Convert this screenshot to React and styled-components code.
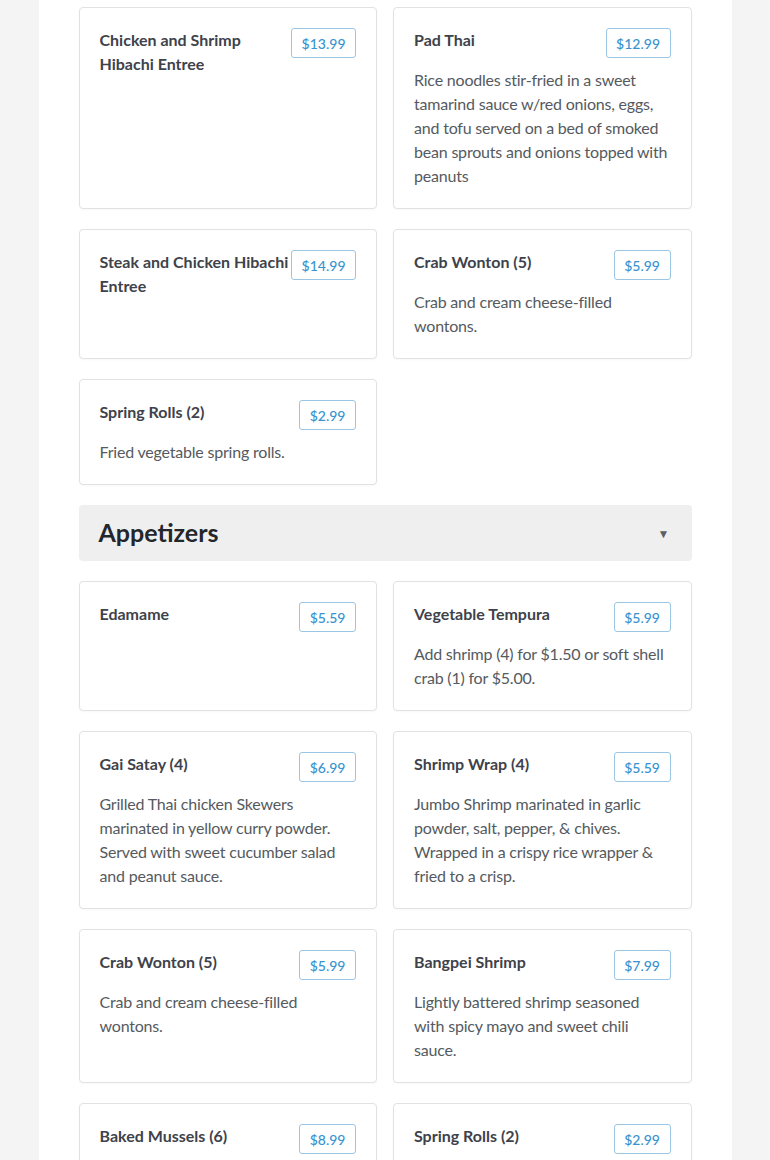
import React from "react";
import styled, { createGlobalStyle } from "styled-components";

const Global = createGlobalStyle`
  html, body { margin: 0; padding: 0; background: #f4f4f4; }
  body { font-family: Lato, "Open Sans", Arial, sans-serif; }
  * { box-sizing: border-box; }
`;

const Page = styled.div`
  width: 90%;
  margin: 0 auto;
  background: #ffffff;
  padding: 7px 40px 40px;
  min-height: 1160px;
`;

const Grid = styled.div`
  display: grid;
  grid-template-columns: 1fr 1fr;
  column-gap: 16px;
  row-gap: 20px;
  margin-bottom: 20px;
`;

const Card = styled.div`
  border: 1px solid #e2e2e2;
  border-radius: 4px;
  background: #fff;
  padding: 20px;
  box-shadow: 0 1px 2px rgba(0, 0, 0, 0.03);
`;

const CardHead = styled.div`
  display: flex;
  align-items: flex-start;
  justify-content: space-between;
`;

const Title = styled.h3`
  margin: 0;
  font-size: 16px;
  line-height: 24px;
  font-weight: 700;
  color: #3e424a;
  flex: 1;
  min-width: 0;
`;

const Price = styled.span`
  flex-shrink: 0;
  display: inline-flex;
  align-items: center;
  height: 30px;
  padding: 0 9.5px;
  border: 1px solid #9ac6e4;
  border-radius: 3px;
  color: #3893d0;
  font-size: 14px;
  font-weight: 500;
`;

const Desc = styled.p`
  margin: 10px 0 0;
  font-size: 16px;
  line-height: 24px;
  letter-spacing: -0.2px;
  color: #555a60;
`;

const SectionHeader = styled.div`
  display: flex;
  align-items: center;
  justify-content: space-between;
  height: 56px;
  padding: 0 20px;
  background: #efefef;
  border-radius: 4px;
  margin-bottom: 20px;
`;

const SectionTitle = styled.h2`
  margin: 0 0 2px;
  font-size: 25px;
  font-weight: 700;
  color: #23262b;
`;

const Arrow = styled.span`
  font-size: 12px;
  color: #5b5f66;
  margin-right: 2px;
`;

const entrees = [
  { t: "Chicken and Shrimp Hibachi Entree", p: "$13.99" },
  {
    t: "Pad Thai",
    p: "$12.99",
    d: "Rice noodles stir-fried in a sweet tamarind sauce w/red onions, eggs, and tofu served on a bed of smoked bean sprouts and onions topped with peanuts",
  },
  { t: "Steak and Chicken Hibachi Entree", p: "$14.99" },
  { t: "Crab Wonton (5)", p: "$5.99", d: "Crab and cream cheese-filled wontons." },
  { t: "Spring Rolls (2)", p: "$2.99", d: "Fried vegetable spring rolls." },
];

const appetizers = [
  { t: "Edamame", p: "$5.59" },
  {
    t: "Vegetable Tempura",
    p: "$5.99",
    d: "Add shrimp (4) for $1.50 or soft shell crab (1) for $5.00.",
  },
  {
    t: "Gai Satay (4)",
    p: "$6.99",
    d: "Grilled Thai chicken Skewers marinated in yellow curry powder. Served with sweet cucumber salad and peanut sauce.",
  },
  {
    t: "Shrimp Wrap (4)",
    p: "$5.59",
    d: "Jumbo Shrimp marinated in garlic powder, salt, pepper, & chives. Wrapped in a crispy rice wrapper & fried to a crisp.",
  },
  { t: "Crab Wonton (5)", p: "$5.99", d: "Crab and cream cheese-filled wontons." },
  {
    t: "Bangpei Shrimp",
    p: "$7.99",
    d: "Lightly battered shrimp seasoned with spicy mayo and sweet chili sauce.",
  },
  { t: "Baked Mussels (6)", p: "$8.99" },
  { t: "Spring Rolls (2)", p: "$2.99" },
];

function Item({ t, p, d }) {
  return (
    <Card>
      <CardHead>
        <Title>{t}</Title>
        <Price>{p}</Price>
      </CardHead>
      {d && <Desc>{d}</Desc>}
    </Card>
  );
}

export default function App() {
  return (
    <>
      <Global />
      <Page>
        <Grid>
          {entrees.map((it, i) => (
            <Item key={i} {...it} />
          ))}
        </Grid>
        <SectionHeader>
          <SectionTitle>Appetizers</SectionTitle>
          <Arrow>▼</Arrow>
        </SectionHeader>
        <Grid>
          {appetizers.map((it, i) => (
            <Item key={i} {...it} />
          ))}
        </Grid>
      </Page>
    </>
  );
}
